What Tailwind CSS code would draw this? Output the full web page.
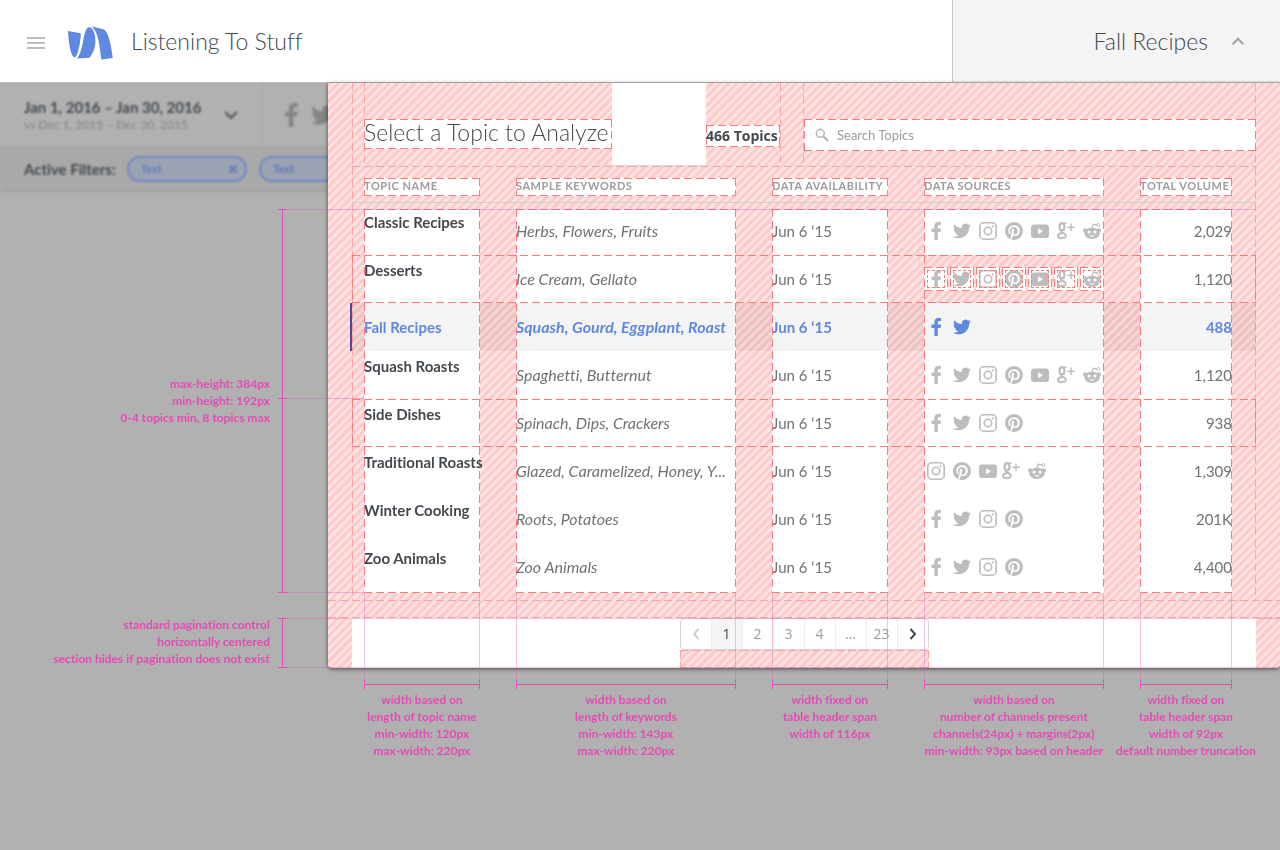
<!DOCTYPE html>
<html lang="en">
<head>
<meta charset="utf-8">
<meta name="viewport" content="width=device-width, initial-scale=1">
<title>Listening To Stuff – Fall Recipes</title>
<script src="https://cdn.jsdelivr.net/npm/@tailwindcss/browser@4"></script>
</head>
<body class="min-h-screen overflow-x-hidden bg-[#b1b1b1] font-['Lato',sans-serif] text-[#43494f] [font-variant-ligatures:none]
  [--hatch:repeating-linear-gradient(135deg,#ffcaca_0px,#ffcaca_3px,#ffe2e2_3px,#ffe2e2_6px)]
  [--dv:repeating-linear-gradient(180deg,#ff7b7b_0px,#ff7b7b_8px,transparent_8px,transparent_12px)]
  [--dh:repeating-linear-gradient(90deg,#ff7b7b_0px,#ff7b7b_8px,transparent_8px,transparent_12px)]
  [--fv:repeating-linear-gradient(180deg,#ffa3a3_0px,#ffa3a3_8px,transparent_8px,transparent_12px)]
  [--fh:repeating-linear-gradient(90deg,#ffa3a3_0px,#ffa3a3_8px,transparent_8px,transparent_12px)]
  [--sides:var(--dv)_left/1px_100%_no-repeat,var(--dv)_right/1px_100%_no-repeat]
  [--ends:var(--dh)_top/100%_1px_no-repeat,var(--dh)_bottom/100%_1px_no-repeat]
  [--fsides:var(--fv)_left/1px_100%_no-repeat,var(--fv)_right/1px_100%_no-repeat]
  [--fends:var(--fh)_top/100%_1px_no-repeat,var(--fh)_bottom/100%_1px_no-repeat]">

<svg class="hidden" aria-hidden="true">
  <symbol id="facebook" viewBox="0 0 18 18"><path d="M7.4 18v-8.100H4.500V6.600h2.900V4.300C7.400 1.500 9 0 11.500 0H14v3.100h-1.600c-1.300 0-1.600.600-1.600 1.600v1.900h3.200l-.4 3.300h-2.800V18z"/></symbol>
  <symbol id="twitter" viewBox="0 0 24 24"><path d="M23.953 4.57a10 10 0 01-2.825.775 4.958 4.958 0 002.163-2.723c-.951.555-2.005.959-3.127 1.184a4.92 4.92 0 00-8.384 4.482C7.69 8.095 4.067 6.13 1.64 3.162a4.822 4.822 0 00-.666 2.475c0 1.71.87 3.213 2.188 4.096a4.904 4.904 0 01-2.228-.616v.06a4.923 4.923 0 003.946 4.827 4.996 4.996 0 01-2.212.085 4.936 4.936 0 004.604 3.417 9.867 9.867 0 01-6.102 2.105c-.39 0-.779-.023-1.17-.067a13.995 13.995 0 007.557 2.209c9.053 0 13.998-7.496 13.998-13.985 0-.21 0-.42-.015-.63A9.935 9.935 0 0024 4.59z"/></symbol>
  <symbol id="instagram" viewBox="0 0 18 18"><g fill="none" stroke="currentColor"><rect x=".8" y=".8" width="16.400" height="16.400" rx="4" stroke-width="1.600"/><circle cx="9" cy="9" r="3.700" stroke-width="1.600"/></g><circle cx="13.700" cy="4.300" r="1.100"/></symbol>
  <symbol id="pinterest" viewBox="0 0 24 24"><path d="M12.017 0C5.396 0 .029 5.367.029 11.987c0 5.079 3.158 9.417 7.618 11.162-.105-.949-.199-2.403.041-3.439.219-.937 1.406-5.957 1.406-5.957s-.359-.72-.359-1.781c0-1.663.967-2.911 2.168-2.911 1.024 0 1.518.769 1.518 1.688 0 1.029-.653 2.567-.992 3.992-.285 1.193.6 2.165 1.775 2.165 2.128 0 3.768-2.245 3.768-5.487 0-2.861-2.063-4.869-5.008-4.869-3.41 0-5.409 2.562-5.409 5.199 0 1.033.394 2.143.889 2.741.099.12.112.225.085.345-.09.375-.293 1.199-.334 1.363-.053.225-.172.271-.401.165-1.495-.69-2.433-2.878-2.433-4.646 0-3.776 2.748-7.252 7.92-7.252 4.158 0 7.392 2.967 7.392 6.923 0 4.135-2.607 7.462-6.233 7.462-1.214 0-2.354-.629-2.758-1.379l-.749 2.848c-.269 1.045-1.004 2.352-1.498 3.146 1.123.345 2.306.535 3.55.535 6.607 0 11.985-5.365 11.985-11.987C23.97 5.39 18.592.026 11.985.026z"/></symbol>
  <symbol id="youtube" viewBox="0 0 18 18"><path fill-rule="evenodd" d="M3 2.500h12c2 0 3 1 3 3v7.500c0 2-1 3-3 3H3c-2 0-3-1-3-3V5.500c0-2 1-3 3-3zM7 6.200v6.100l5.200-3z"/></symbol>
  <symbol id="gplus" viewBox="0 0 18 18"><g fill="none" stroke="currentColor"><ellipse cx="5" cy="4.800" rx="2.500" ry="3.600" stroke-width="2.200"/><path d="M5.500 1.100h4.500" stroke-width="1.200"/><path d="M4.200 8.200c-.9 1.100-.3 1.900 1.300 2.500 1.800.7 3.300 1.300 3.300 2.900 0 1.700-1.700 2.600-4 2.600-2.200 0-3.800-.8-3.800-2.400S2.700 11.200 5.500 11" stroke-width="1.900"/><path d="M14 1.500v7.500M10.300 5.200h7.500" stroke-width="1.400"/></g></symbol>
  <symbol id="reddit" viewBox="0 0 18 18"><path fill-rule="evenodd" d="M9 5.800c1.900 0 3.600.5 4.900 1.300.6-.6 1.300-.9 2-.9 1.300 0 2.100.8 2.100 2 0 .9-.5 1.600-1.300 1.900.1.300.1.600.1.900 0 3.300-3.500 5.900-7.800 5.900S1.200 14.300 1.200 11c0-.3 0-.6.1-.9C.5 9.800 0 9.100 0 8.200 0 7 .8 6.200 2.100 6.200c.7 0 1.400.3 2 .9C5.400 6.300 7.100 5.800 9 5.800zM6 8.400a1.500 1.500 0 100 3 1.500 1.500 0 000-3zm6 0a1.500 1.500 0 100 3 1.500 1.500 0 000-3zM5.800 13c.8 1.200 1.900 1.700 3.200 1.700s2.400-.5 3.200-1.700c-2 .8-4.400.8-6.400 0z"/><path d="M9 6.300l.9-4.200 4 .8" fill="none" stroke="currentColor" stroke-width="1.100"/><circle cx="15.400" cy="3" r="1.500" fill="none" stroke="currentColor"/></symbol>
</svg>

<header class="flex h-[83px] items-stretch border-b border-[#bdbdbd] bg-white">
  <div class="flex flex-1 items-center pl-[26px]">
    <button type="button" aria-label="Menu" class="text-[#bdbdbd]"><svg class="h-5 w-5" viewBox="0 0 20 20" stroke="currentColor" stroke-width="2"><path d="M1 7h18M1 12h18M1 17h18"/></svg></button>
    <svg class="ml-[21px] h-[38px] w-12 shrink-0" viewBox="67 22 48 38" fill="#5f88e0" aria-hidden="true">
      <path d="M68 31l12.700 2.200c.2 5-.9 11-2.100 16-1.100 4.500-2.400 8-4 8-1.900 0-3.600-4-4.700-9.500C68.900 42.500 68.300 36.500 68 31z"/>
      <path d="M77 58.600c3.800-5 5-12 6.300-18.500 1.300-6.600 2.700-12.800 5.900-12.800 4 0 6.200 6.700 6.200 14 0 6.500-2.200 11.700-5.800 16.500z"/>
      <path d="M91.500 26.200l12.500 3.400c4.400 3.600 6.700 13 8.800 28.400l-11.500 1.500C99.500 45 98.500 32 91.500 26.200z"/>
    </svg>
    <h1 class="ml-4 text-[23px] leading-7 font-light">Listening To Stuff</h1>
  </div>
  <button type="button" aria-expanded="true" class="flex w-[328px] shrink-0 items-center justify-end gap-6 border-l border-[#c9c9c9] bg-[#f4f4f4] pr-9 text-[23px] leading-7 font-light">
    <span>Fall Recipes</span>
    <svg class="h-3 w-3" viewBox="0 0 12 12" fill="none" stroke="#a3a3a3" stroke-width="2"><path d="M.7 9.300L6 3.800l5.300 5.500"/></svg>
  </button>
</header>

<main class="flex items-start">
  <aside class="w-[328px] shrink-0 overflow-hidden">
    <div class="blur-[1px]">
      <div class="flex h-[65px] items-stretch border-b-2 border-[#a6a6a6]">
        <button type="button" class="flex w-[263px] shrink-0 items-center justify-between border-r-2 border-[#a9a9a9] pr-6 pl-6 text-left">
          <span class="flex flex-col"><strong class="text-[15px] leading-5">Jan 1, 2016 – Jan 30, 2016</strong><span class="text-xs leading-4 text-[#858585]">vs Dec 1, 2015 – Dec 30, 2015</span></span>
          <svg class="h-3 w-3" viewBox="0 0 12 12" fill="none" stroke="#5c5f62" stroke-width="2.500"><path d="M0 3l6 6 6-6"/></svg>
        </button>
        <div class="flex items-center gap-2 pl-[16px] text-[#858585]">
          <svg class="h-6 w-6 shrink-0 fill-current"><use href="#facebook"/></svg>
          <svg class="h-6 w-6 shrink-0 fill-current"><use href="#twitter"/></svg>
        </div>
      </div>
      <div class="flex h-11 items-center border-b-2 border-[#a1a1a1] bg-[#a9a9a9] pl-6">
        <strong class="w-[103px] shrink-0 text-[15px] leading-5">Active Filters:</strong>
        <button type="button" class="flex h-[26px] w-30 shrink-0 items-center justify-between rounded-full border-2 border-[#6f86c4] bg-[#9ba3b3] px-2 pl-3 text-[11px] font-bold text-[#6178bd]">Text
          <svg class="h-2 w-2" viewBox="0 0 8 8" stroke="currentColor" stroke-width="2"><path d="M0 0l8 8M8 0L0 8"/></svg>
        </button>
        <button type="button" class="ml-3 flex h-[26px] w-30 shrink-0 items-center rounded-full border-2 border-[#6f86c4] bg-[#9ba3b3] px-3 text-[11px] font-bold text-[#6178bd]">Text</button>
      </div>
    </div>

    <div class="mt-[17px] flex h-96 items-stretch justify-end pr-[41px] text-right text-xs leading-[17px] font-bold text-[#e04fb5]">
      <p class="self-center pr-2 pb-0.5">max-height: 384px<br>min-height: 192px<br>0-4 topics min, 8 topics max</p>
      <div class="flex w-[9px] flex-col items-center border-y border-[#e04fb5]"><i class="h-[188px] w-px bg-[#e04fb5]"></i><i class="h-px w-[9px] bg-[#e04fb5]"></i><i class="w-px flex-1 bg-[#e04fb5]"></i></div>
    </div>
    <div class="mt-[25px] flex h-[50px] items-stretch justify-end pr-[41px] text-right text-xs leading-[17px] font-bold text-[#e04fb5]">
      <p class="-mt-1 self-center pr-2">standard pagination control<br>horizontally centered<br>section hides if pagination does not exist</p>
      <div class="flex w-[9px] justify-center border-y border-[#e04fb5]"><i class="w-px bg-[#e04fb5]"></i></div>
    </div>
  </aside>

  <div class="min-w-0 flex-1">
    <section class="relative rounded-b-sm bg-[image:var(--hatch)] shadow-[0_1px_4px_rgba(0,0,0,0.6)]">
      <div class="mx-6 [background:var(--fsides)]">
        <div class="ml-3 flex h-[82px] items-stretch [background:var(--fv)_left/1px_100%_no-repeat]">
          <h2 class="mt-9 mb-4 flex w-62 shrink-0 items-center pb-1 text-[23px] leading-6 font-light whitespace-nowrap [background:var(--sides),var(--ends),white]">Select a Topic to Analyze</h2>
          <div class="w-[94px] shrink-0 bg-white"></div>
          <p class="mt-[42px] mb-[18px] flex w-[74px] shrink-0 items-center font-['Open_Sans',sans-serif] text-sm font-bold whitespace-nowrap [background:var(--sides),var(--ends),white]">466 Topics</p>
          <div class="w-6 shrink-0 [background:var(--fsides)]"></div>
          <label class="mt-9 mb-[14px] flex flex-1 items-center gap-2 pl-[11px] [background:var(--sides),var(--ends),white]">
            <svg class="h-[14px] w-[14px] shrink-0" viewBox="0 0 14 14" fill="none" stroke="#b5b5b5" stroke-width="1.500"><circle cx="5.300" cy="5.300" r="4"/><path d="M8.300 8.300l4.700 4.700" stroke-width="2"/></svg>
            <input type="search" aria-label="Search Topics" placeholder="Search Topics" class="w-full bg-transparent text-[13px] leading-5 outline-none placeholder:text-[#9b9b9b]">
          </label>
        </div>

        <table class="w-full table-fixed border-separate border-spacing-0 border-t border-[#dedbd8] text-left">
          <colgroup><col class="w-32"><col><col class="w-[152px]"><col class="w-54"><col class="w-[152px]"></colgroup>
          <thead class="text-[11px] leading-4 tracking-wider whitespace-nowrap text-[#9b9b9b] [&_th]:border-b [&_th]:border-[#cfcfcf] [&_th]:pt-3 [&_th]:pb-1.5 [&_th]:pl-9 [&_th]:font-bold [&_th:first-child]:pl-3 [&_th:last-child]:pr-6 [&_th>div]:h-[18px] [&_th>div]:[background:var(--sides),var(--ends),white]">
            <tr class="[background:var(--fends)]"><th scope="col"><div>TOPIC NAME</div></th><th scope="col"><div>SAMPLE KEYWORDS</div></th><th scope="col"><div>DATA AVAILABILITY</div></th><th scope="col"><div>DATA SOURCES</div></th><th scope="col"><div>TOTAL VOLUME</div></th></tr>
          </thead>
          <tbody class="text-[15px] leading-5 whitespace-nowrap text-[#707274]
            [&_td]:p-0 [&_td]:pl-9 [&_td:first-child]:pl-3 [&_td:last-child]:pr-6
            [&_td>div]:flex [&_td>div]:h-12 [&_td>div]:items-end [&_td>div]:pb-[14px] [&_td>div]:[background:var(--sides),white]
            [&_td:first-child>div]:pb-[23px] [&_td:first-child]:font-bold [&_td:first-child]:text-[#43494f]
            [&_td:nth-child(2)]:text-base [&_td:nth-child(2)]:leading-5 [&_td:nth-child(2)]:italic [&_td:last-child>div]:justify-end
            [&_td:nth-child(4)>div]:gap-0.5 [&_td:nth-child(4)>div]:pb-[15px] [&_td:nth-child(4)>div]:text-[#bdbdbd]
            [&_svg]:mx-[3px] [&_svg]:h-[18px] [&_svg]:w-[18px] [&_svg]:shrink-0 [&_svg]:fill-current
            [&>tr:first-child>td]:pt-1.5 [&>tr:first-child>td>div]:h-[46px] [&>tr:first-child>td>div]:[background:var(--sides),var(--dh)_top/100%_1px_no-repeat,white]
            [&>tr:last-child>td]:pb-[7px] [&>tr:last-child>td>div]:h-[50px] [&>tr:last-child>td>div]:border-b-2 [&>tr:last-child>td>div]:border-transparent [&>tr:last-child>td>div]:[background:var(--sides),var(--dh)_bottom/100%_1px_no-repeat_border-box,white]">
            <tr><td><div>Classic Recipes</div></td><td><div>Herbs, Flowers, Fruits</div></td><td><div>Jun 6 ‘15</div></td>
              <td><div><svg><use href="#facebook"/></svg><svg><use href="#twitter"/></svg><svg><use href="#instagram"/></svg><svg><use href="#pinterest"/></svg><svg><use href="#youtube"/></svg><svg><use href="#gplus"/></svg><svg><use href="#reddit"/></svg></div></td><td><div>2,029</div></td></tr>
            <tr class="relative"><td><div>Desserts</div><i class="pointer-events-none absolute inset-0 [background:var(--sides),var(--ends)]"></i></td><td><div>Ice Cream, Gellato</div></td><td><div>Jun 6 ‘15</div></td>
              <td><div class="gap-0.5 pb-3! [background:var(--sides),var(--hatch)]! [&>span]:flex [&>span]:h-6 [&>span]:w-6 [&>span]:shrink-0 [&>span]:items-center [&>span]:justify-center [&>span]:[background:var(--sides),var(--ends),white] [&_svg]:outline-1 [&_svg]:-outline-offset-1 [&_svg]:outline-dashed [&_svg]:outline-[#ff7b7b]"><span><svg><use href="#facebook"/></svg></span><span><svg><use href="#twitter"/></svg></span><span><svg><use href="#instagram"/></svg></span><span><svg><use href="#pinterest"/></svg></span><span><svg><use href="#youtube"/></svg></span><span><svg><use href="#gplus"/></svg></span><span><svg><use href="#reddit"/></svg></span></div></td><td><div>1,120</div></td></tr>
            <tr aria-selected="true" class="relative bg-black/5 font-bold text-[#5f88e0] [&>td>div]:[background:var(--sides),#f4f4f4]!"><td class="text-[#5f88e0]!"><div class="pb-[14px]!">Fall Recipes</div><i class="absolute inset-y-0 -left-0.5 w-0.5 bg-[#5145a0]"></i></td><td><div>Squash, Gourd, Eggplant, Roast</div></td><td><div>Jun 6 ‘15</div></td>
              <td><div class="text-[#5f88e0]!"><svg><use href="#facebook"/></svg><svg><use href="#twitter"/></svg></div></td><td><div>488</div></td></tr>
            <tr><td><div>Squash Roasts</div></td><td><div>Spaghetti, Butternut</div></td><td><div>Jun 6 ‘15</div></td>
              <td><div><svg><use href="#facebook"/></svg><svg><use href="#twitter"/></svg><svg><use href="#instagram"/></svg><svg><use href="#pinterest"/></svg><svg><use href="#youtube"/></svg><svg><use href="#gplus"/></svg><svg><use href="#reddit"/></svg></div></td><td><div>1,120</div></td></tr>
            <tr class="relative"><td><div>Side Dishes</div><i class="pointer-events-none absolute inset-0 [background:var(--sides),var(--ends)]"></i></td><td><div>Spinach, Dips, Crackers</div></td><td><div>Jun 6 ‘15</div></td>
              <td><div><svg><use href="#facebook"/></svg><svg><use href="#twitter"/></svg><svg><use href="#instagram"/></svg><svg><use href="#pinterest"/></svg></div></td><td><div>938</div></td></tr>
            <tr><td><div>Traditional Roasts</div></td><td><div>Glazed, Caramelized, Honey, Y...</div></td><td><div>Jun 6 ‘15</div></td>
              <td><div><svg><use href="#instagram"/></svg><svg><use href="#pinterest"/></svg><svg><use href="#youtube"/></svg><svg class="ml-0!"><use href="#gplus"/></svg><svg><use href="#reddit"/></svg></div></td><td><div>1,309</div></td></tr>
            <tr><td><div>Winter Cooking</div></td><td><div>Roots, Potatoes</div></td><td><div>Jun 6 ‘15</div></td>
              <td><div><svg><use href="#facebook"/></svg><svg><use href="#twitter"/></svg><svg><use href="#instagram"/></svg><svg><use href="#pinterest"/></svg></div></td><td><div>201K</div></td></tr>
            <tr><td><div>Zoo Animals</div></td><td><div>Zoo Animals</div></td><td><div>Jun 6 ‘15</div></td>
              <td><div><svg><use href="#facebook"/></svg><svg><use href="#twitter"/></svg><svg><use href="#instagram"/></svg><svg><use href="#pinterest"/></svg></div></td><td><div>4,400</div></td></tr>
          </tbody>
        </table>
      </div>
      <div class="h-[18px] [background:var(--fends)]"></div>
      <div class="mx-6 flex h-[50px] justify-center bg-white">
        <div class="flex flex-col">
          <nav aria-label="Pagination" class="flex h-8 items-stretch rounded-sm border border-[#d6d6d6] bg-white font-['Open_Sans',sans-serif] text-sm text-[#9b9b9b] [&>*]:flex [&>*]:w-[31px] [&>*]:items-center [&>*]:justify-center [&>*]:border-r [&>*]:border-[#ececec] [&>*:last-child]:w-[30px] [&>*:last-child]:border-r-0">
            <button type="button" aria-label="Previous page" disabled><svg class="h-3 w-3" viewBox="0 0 12 12" fill="none" stroke="#cfcfcf" stroke-width="2"><path d="M8.500 1L4 6l4.500 5"/></svg></button>
            <button type="button" aria-current="page" class="bg-[#f4f4f4] text-[#43494f]">1</button><button type="button">2</button><button type="button">3</button><button type="button">4</button><span>...</span><button type="button">23</button>
            <button type="button" aria-label="Next page"><svg class="h-3 w-3" viewBox="0 0 12 12" fill="none" stroke="#43494f" stroke-width="2"><path d="M3.500 1L8 6l-4.500 5"/></svg></button>
          </nav>
          <div class="flex-1 [background:var(--fsides),var(--fends),var(--hatch)]"></div>
        </div>
      </div>
      <div class="pointer-events-none absolute top-[126px] right-6 -left-[41px] border-t border-[#e04fb5]/35"></div>
      <div class="pointer-events-none absolute top-[315px] -left-[41px] h-[195px] w-[77px] border-y border-[#e04fb5]/35"></div>
      <div class="pointer-events-none absolute right-0 bottom-0 -left-[41px] h-[50px] border-y border-[#e04fb5]/35"></div>
    </section>

    <div class="mt-3 grid grid-cols-[116px_minmax(0,1fr)_116px_180px_92px] gap-x-9 pr-12 pl-9 text-center text-xs leading-[17px] font-bold whitespace-nowrap text-[#e04fb5]
      [&>div]:relative [&>div]:flex [&>div]:flex-col [&>div]:items-center
      [&_i]:mb-0.5 [&_i]:flex [&_i]:h-[9px] [&_i]:w-full [&_i]:items-center [&_i]:border-x [&_i]:border-[#e04fb5] [&_i]:before:h-px [&_i]:before:w-full [&_i]:before:bg-[#e04fb5]
      [&_b]:pointer-events-none [&_b]:absolute [&_b]:bottom-full [&_b]:h-[87px] [&_b]:w-full [&_b]:border-x [&_b]:border-[#e04fb5]/35">
      <div><b></b><i></i><p>width based on<br>length of topic name<br>min-width: 120px<br>max-width: 220px</p></div>
      <div><b></b><i></i><p>width based on<br>length of keywords<br>min-width: 143px<br>max-width: 220px</p></div>
      <div><b></b><i></i><p>width fixed on<br>table header span<br>width of 116px</p></div>
      <div><b></b><i></i><p>width based on<br>number of channels present<br>channels(24px) + margins(2px)<br>min-width: 93px based on header</p></div>
      <div><b></b><i></i><p>width fixed on<br>table header span<br>width of 92px<br>default number truncation</p></div>
    </div>
  </div>
</main>
</body>
</html>
